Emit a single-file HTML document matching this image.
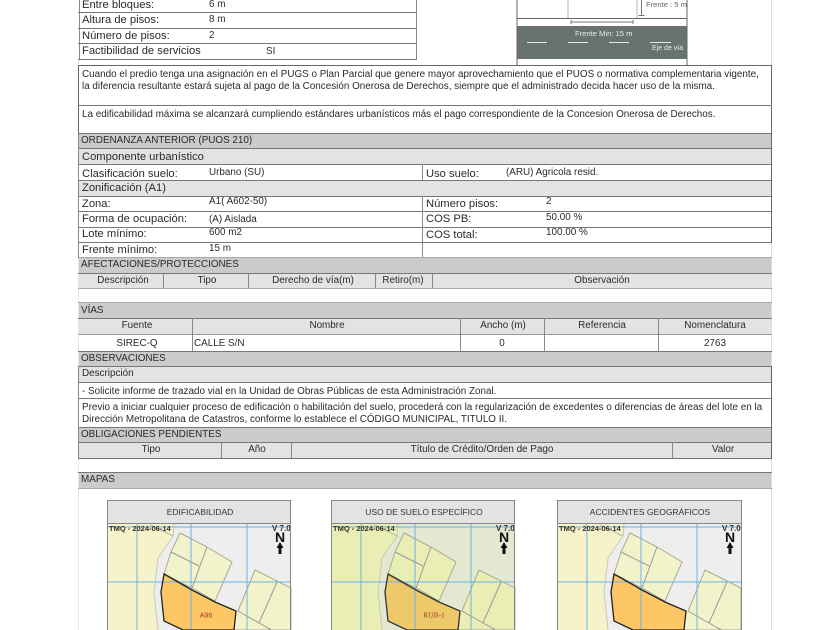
<!DOCTYPE html>
<html><head><meta charset="utf-8">
<style>
html,body{margin:0;padding:0;background:#fff}
#p{position:relative;width:840px;height:630px;overflow:hidden;background:#fff;font-family:"Liberation Sans",sans-serif;color:#2a2a2a;filter:blur(.35px)}
.r{position:absolute;box-sizing:border-box}
.d{background:#cbcbcb}.l{background:#e3e3e3}
.h{position:absolute;height:1px;background:#777}
.v{position:absolute;width:1px;background:#888}
.t{position:absolute;white-space:nowrap;line-height:14px;font-size:9.900px;margin-top:1px}
.b{font-size:11.200px}.m{font-size:9.900px}
.c{transform:translateX(-50%)}
svg text{font-family:"Liberation Sans",sans-serif}
</style></head><body><div id="p">
<div class="v" style="left:771px;top:0;height:630px;background:#ddd"></div>
<div class="v" style="left:78px;top:60px;height:570px;background:#e8e8e8"></div>

<!-- top table -->
<div class="h" style="left:78px;width:339px;top:12px"></div>
<div class="h" style="left:78px;width:339px;top:28px"></div>
<div class="h" style="left:78px;width:339px;top:43px"></div>
<div class="h" style="left:78px;width:339px;top:59px"></div>
<div class="v" style="left:79px;top:0;height:59px"></div>
<div class="v" style="left:416px;top:0;height:59px"></div>
<div class="t b" style="left:82px;top:-3px">Entre bloques:</div>
<div class="t b" style="left:82px;top:12px">Altura de pisos:</div>
<div class="t b" style="left:82px;top:28px">Número de pisos:</div>
<div class="t b" style="left:82px;top:43px">Factibilidad de servicios</div>
<div class="t" style="left:209px;top:-3px">6 m</div>
<div class="t" style="left:209px;top:12px">8 m</div>
<div class="t" style="left:209px;top:28px">2</div>
<div class="t" style="left:266px;top:44px">SI</div>

<!-- diagram -->
<svg class="r" style="left:510px;top:0" width="178" height="66" viewBox="0 0 178 66">
<rect x="7" y="0" width="170" height="66" fill="#fff"/>
<rect x="7" y="26" width="170" height="33" fill="#687370"/>
<path d="M7 0V66M177 0V66" stroke="#666" fill="none"/>
<path d="M7 18.500H177" stroke="#666" fill="none"/>
<path d="M58 0V18M127 0V18" stroke="#b4c6dc" stroke-width="1.200" fill="none"/>
<path d="M61 22H123M61 20V24M123 20V24" stroke="#777" fill="none"/>
<path d="M131.500 0V15M128.500 15.500H134.500" stroke="#777" fill="none"/>
<text x="136" y="7" font-size="7.600" fill="#666">Frente : 5 m</text>
<text x="65" y="36" font-size="7.600" fill="#e8eceb">Frente Min: 15 m</text>
<path d="M17 42.500H37M58 42.500H78M99 42.500H119M140 42.500H161" stroke="#e4e8e7" fill="none"/>
<text x="142" y="50" font-size="7" fill="#e8eceb">Eje de vía</text>
</svg>

<!-- notes -->
<div class="r" style="left:78px;top:65px;width:694px;height:70px;border:1px solid #666;border-bottom:0"></div>
<div class="h" style="left:78px;width:694px;top:105px"></div>
<div class="t" style="left:82px;top:67px">Cuando el predio tenga una asignación en el PUGS o Plan Parcial que genere mayor aprovechamiento que el PUOS o normativa complementaria vigente,</div>
<div class="t" style="left:82px;top:79px">la diferencia resultante estará sujeta al pago de la Concesión Onerosa de Derechos, siempre que el administrado decida hacer uso de la misma.</div>
<div class="t" style="left:82px;top:107px">La edificabilidad máxima se alcanzará cumpliendo estándares urbanísticos más el pago correspondiente de la Concesion Onerosa de Derechos.</div>

<!-- bands -->
<div class="r d" style="left:79px;top:134px;width:692px;height:15px"></div>
<div class="r l" style="left:79px;top:149px;width:692px;height:15px"></div>
<div class="r l" style="left:79px;top:181px;width:692px;height:15px"></div>
<div class="r d" style="left:79px;top:258px;width:692px;height:15px"></div>
<div class="r l" style="left:79px;top:274px;width:692px;height:15px"></div>
<div class="r d" style="left:79px;top:303px;width:692px;height:15px"></div>
<div class="r l" style="left:79px;top:319px;width:692px;height:15px"></div>
<div class="r d" style="left:79px;top:351px;width:692px;height:15px"></div>
<div class="r l" style="left:79px;top:367px;width:692px;height:15px"></div>
<div class="r d" style="left:79px;top:428px;width:692px;height:14px"></div>
<div class="r l" style="left:79px;top:443px;width:692px;height:15px"></div>
<div class="r d" style="left:79px;top:473px;width:692px;height:15px"></div>

<!-- horizontal rules -->
<div class="h" style="left:78px;width:694px;top:133px"></div>
<div class="h" style="left:78px;width:694px;top:148px"></div>
<div class="h" style="left:78px;width:694px;top:164px"></div>
<div class="h" style="left:78px;width:694px;top:180px"></div>
<div class="h" style="left:78px;width:694px;top:196px"></div>
<div class="h" style="left:78px;width:694px;top:211px"></div>
<div class="h" style="left:78px;width:694px;top:227px"></div>
<div class="h" style="left:78px;width:694px;top:242px"></div>
<div class="h" style="left:78px;width:694px;top:257px;background:#aaa"></div>
<div class="h" style="left:78px;width:694px;top:273px"></div>
<div class="h" style="left:78px;width:694px;top:288px;background:#aaa"></div>
<div class="h" style="left:78px;width:694px;top:302px;background:#aaa"></div>
<div class="h" style="left:78px;width:694px;top:318px"></div>
<div class="h" style="left:78px;width:694px;top:334px;background:#999"></div>
<div class="h" style="left:78px;width:694px;top:351px"></div>
<div class="h" style="left:78px;width:694px;top:366px"></div>
<div class="h" style="left:78px;width:694px;top:382px"></div>
<div class="h" style="left:78px;width:694px;top:398px"></div>
<div class="h" style="left:78px;width:694px;top:427px"></div>
<div class="h" style="left:78px;width:694px;top:442px"></div>
<div class="h" style="left:78px;width:694px;top:458px"></div>
<div class="h" style="left:78px;width:694px;top:472px"></div>
<div class="h" style="left:78px;width:694px;top:488px;background:#aaa"></div>

<!-- verticals -->
<div class="v" style="left:78px;top:133px;height:125px"></div>
<div class="v" style="left:771px;top:133px;height:110px;background:#666"></div>
<div class="v" style="left:422px;top:164px;height:16px"></div>
<div class="v" style="left:422px;top:196px;height:61px"></div>
<div class="v" style="left:163px;top:273px;height:15px"></div>
<div class="v" style="left:248px;top:273px;height:15px"></div>
<div class="v" style="left:375px;top:273px;height:15px"></div>
<div class="v" style="left:432px;top:273px;height:15px"></div>
<div class="v" style="left:192px;top:318px;height:33px"></div>
<div class="v" style="left:460px;top:318px;height:33px"></div>
<div class="v" style="left:544px;top:318px;height:33px"></div>
<div class="v" style="left:658px;top:318px;height:33px"></div>
<div class="v" style="left:78px;top:366px;height:92px"></div>
<div class="v" style="left:771px;top:366px;height:92px;background:#666"></div>
<div class="v" style="left:221px;top:442px;height:16px"></div>
<div class="v" style="left:291px;top:442px;height:16px"></div>
<div class="v" style="left:672px;top:442px;height:16px"></div>

<!-- ordenanza text -->
<div class="t m" style="left:81px;top:133px">ORDENANZA ANTERIOR (PUOS 210)</div>
<div class="t b" style="left:82px;top:149px">Componente urbanístico</div>
<div class="t b" style="left:82px;top:166px">Clasificación suelo:</div>
<div class="t" style="left:209px;top:165px">Urbano (SU)</div>
<div class="t b" style="left:426px;top:166px">Uso suelo:</div>
<div class="t" style="left:506px;top:165px">(ARU) Agricola resid.</div>
<div class="t b" style="left:82px;top:180px">Zonificación (A1)</div>
<div class="t b" style="left:82px;top:196px">Zona:</div>
<div class="t" style="left:209px;top:194px">A1( A602-50)</div>
<div class="t b" style="left:82px;top:211px">Forma de ocupación:</div>
<div class="t" style="left:209px;top:212px">(A) Aislada</div>
<div class="t b" style="left:82px;top:226px">Lote mínimo:</div>
<div class="t" style="left:209px;top:225px">600 m2</div>
<div class="t b" style="left:82px;top:242px">Frente mínimo:</div>
<div class="t" style="left:209px;top:241px">15 m</div>
<div class="t b" style="left:426px;top:196px">Número pisos:</div>
<div class="t" style="left:546px;top:194px">2</div>
<div class="t b" style="left:426px;top:211px">COS PB:</div>
<div class="t" style="left:546px;top:210px">50.00 %</div>
<div class="t b" style="left:426px;top:227px">COS total:</div>
<div class="t" style="left:546px;top:225px">100.00 %</div>

<div class="t m" style="left:81px;top:257px">AFECTACIONES/PROTECCIONES</div>
<div class="t c m" style="left:123px;top:273px">Descripción</div>
<div class="t c m" style="left:207px;top:273px">Tipo</div>
<div class="t c m" style="left:313px;top:273px">Derecho de vía(m)</div>
<div class="t c m" style="left:403px;top:273px">Retiro(m)</div>
<div class="t c m" style="left:602px;top:273px">Observación</div>

<div class="t m" style="left:81px;top:303px">VÍAS</div>
<div class="t c m" style="left:137px;top:318px">Fuente</div>
<div class="t c m" style="left:327px;top:318px">Nombre</div>
<div class="t c m" style="left:503px;top:318px">Ancho (m)</div>
<div class="t c m" style="left:602px;top:318px">Referencia</div>
<div class="t c m" style="left:715px;top:318px">Nomenclatura</div>
<div class="t c m" style="left:137px;top:336px">SIREC-Q</div>
<div class="t m" style="left:194px;top:336px">CALLE S/N</div>
<div class="t c m" style="left:502px;top:336px">0</div>
<div class="t c m" style="left:715px;top:336px">2763</div>

<div class="t m" style="left:81px;top:351px">OBSERVACIONES</div>
<div class="t" style="left:82px;top:366px">Descripción</div>
<div class="t m" style="left:82px;top:384px">- Solicite informe de trazado vial en la Unidad de Obras Públicas de esta Administración Zonal.</div>
<div class="t m" style="left:82px;top:400px">Previo a iniciar cualquier proceso de edificación o habilitación del suelo, procederá con la regularización de excedentes o diferencias de áreas del lote en la</div>
<div class="t m" style="left:82px;top:412px">Dirección Metropolitana de Catastros, conforme lo establece el CÓDIGO MUNICIPAL, TITULO II.</div>
<div class="t m" style="left:81px;top:427px">OBLIGACIONES PENDIENTES</div>
<div class="t c m" style="left:151px;top:442px">Tipo</div>
<div class="t c m" style="left:257px;top:442px">Año</div>
<div class="t c m" style="left:482px;top:442px">Título de Crédito/Orden de Pago</div>
<div class="t c m" style="left:723px;top:442px">Valor</div>
<div class="t m" style="left:81px;top:472px">MAPAS</div>

<!-- map 1 -->
<svg class="r" style="left:107px;top:500px" width="185" height="130" viewBox="0 0 185 130">
<rect x="1" y="1" width="183" height="22" fill="#e3e3e3"/>
<text x="93" y="15" font-size="8.500" text-anchor="middle" fill="#333">EDIFICABILIDAD</text>
<rect x="1" y="24" width="183" height="106" fill="#eeeeee"/>
<path d="M1 24H67L66 36L51 58L47 92L51 130H1Z" fill="#f6f3cb"/>
<path d="M67 24L66 36L51 58L47 92L51 130" stroke="#c9c9b4" fill="none"/>
<path d="M43 25L66 36" stroke="#b9b9a0" fill="none"/>
<path d="M73 33L100 47L125 62L108 101L85 88L57 74L64 52Z" fill="#f3f3cb" stroke="#a9a990"/>
<path d="M64 52L92 66M100 47L85 88" stroke="#999" fill="none"/>
<path d="M148 70L184 88V130H120L131 111Z" fill="#f3f3cb" stroke="#a9a990"/>
<path d="M170 82L152 123M131 111L152 123L170 133" stroke="#999" fill="none"/>
<path d="M108 101L131 111L127 130H108Z" fill="#f3f3cb"/>
<path d="M57 74L85 90L108 102L129 111L127 130H76L57 121L54 92Z" fill="#fdc766"/>
<path d="M30 24V130M84 24V130M140 24V130M1 82H184M1 27H184" stroke="#6cb2e6" fill="none"/>
<path d="M57 74L85 90L108 102L129 111L127 130H76L57 121L54 92Z" fill="none" stroke="#222" stroke-width="1.300"/>
<text x="99" y="117.500" font-size="7" text-anchor="middle" fill="#a5392b">A96</text>
<text x="2" y="31" font-size="7.500" font-weight="bold" fill="#333">TMQ - 2024-06-14</text>
<text x="165" y="31" font-size="8" font-weight="bold" fill="#333">V 7.0</text>
<text x="173" y="42" font-size="14" font-weight="bold" text-anchor="middle" fill="#111">N</text>
<path d="M173 42L176.500 48H174.500V54H171.500V48H169.500Z" fill="#111"/>
<path d="M.5 130V.5H183.500V130M0 23.500H184" fill="none" stroke="#888"/>
</svg>

<!-- map 2 -->
<svg class="r" style="left:331px;top:500px" width="185" height="130" viewBox="0 0 185 130">
<rect x="1" y="1" width="183" height="22" fill="#e3e3e3"/>
<text x="93" y="15" font-size="8.500" text-anchor="middle" fill="#333">USO DE SUELO ESPECÍFICO</text>
<rect x="1" y="24" width="183" height="106" fill="#e3e9d0"/>
<path d="M1 24H67L66 36L51 58L47 92L51 130H1Z" fill="#e8eeb4"/>
<path d="M67 24L66 36L51 58L47 92L51 130" stroke="#c5c9a8" fill="none"/>
<path d="M43 25L66 36" stroke="#b9b9a0" fill="none"/>
<path d="M73 33L100 47L125 62L108 101L85 88L57 74L64 52Z" fill="#e8eeb4" stroke="#a9a990"/>
<path d="M64 52L92 66M100 47L85 88" stroke="#999" fill="none"/>
<path d="M148 70L184 88V130H120L131 111Z" fill="#e8eeb4" stroke="#a9a990"/>
<path d="M170 82L152 123M131 111L152 123L170 133" stroke="#999" fill="none"/>
<path d="M108 101L131 111L127 130H108Z" fill="#e8eeb4"/>
<path d="M57 74L85 90L108 102L129 111L127 130H76L57 121L54 92Z" fill="#eec96a"/>
<path d="M30 24V130M84 24V130M140 24V130M1 82H184M1 27H184" stroke="#6cb2e6" fill="none"/>
<path d="M57 74L85 90L108 102L129 111L127 130H76L57 121L54 92Z" fill="none" stroke="#333" stroke-width="1.300"/>
<text x="103" y="117.500" font-size="7.500" text-anchor="middle" style="font-family:'Liberation Serif',serif" fill="#a5392b">RUB-1</text>
<text x="2" y="31" font-size="7.500" font-weight="bold" fill="#333">TMQ - 2024-06-14</text>
<text x="165" y="31" font-size="8" font-weight="bold" fill="#333">V 7.0</text>
<text x="173" y="42" font-size="14" font-weight="bold" text-anchor="middle" fill="#111">N</text>
<path d="M173 42L176.500 48H174.500V54H171.500V48H169.500Z" fill="#111"/>
<path d="M.5 130V.5H183.500V130M0 23.500H184" fill="none" stroke="#888"/>
</svg>

<!-- map 3 -->
<svg class="r" style="left:557px;top:500px" width="186" height="130" viewBox="0 0 186 130">
<rect x="1" y="1" width="183" height="22" fill="#e3e3e3"/>
<text x="93" y="15" font-size="8.500" text-anchor="middle" fill="#333">ACCIDENTES GEOGRÁFICOS</text>
<rect x="1" y="24" width="183" height="106" fill="#eeeeee"/>
<path d="M1 24H67L66 36L51 58L47 92L51 130H1Z" fill="#f6f3cb"/>
<path d="M67 24L66 36L51 58L47 92L51 130" stroke="#c9c9b4" fill="none"/>
<path d="M43 25L66 36" stroke="#b9b9a0" fill="none"/>
<path d="M73 33L100 47L125 62L108 101L85 88L57 74L64 52Z" fill="#f3f3cb" stroke="#a9a990"/>
<path d="M64 52L92 66M100 47L85 88" stroke="#999" fill="none"/>
<path d="M148 70L184 88V130H120L131 111Z" fill="#f3f3cb" stroke="#a9a990"/>
<path d="M170 82L152 123M131 111L152 123L170 133" stroke="#999" fill="none"/>
<path d="M108 101L131 111L127 130H108Z" fill="#f3f3cb"/>
<path d="M57 74L85 90L108 102L129 111L127 130H76L57 121L54 92Z" fill="#fdc766"/>
<path d="M30 24V130M84 24V130M140 24V130M1 82H184M1 27H184" stroke="#6cb2e6" fill="none"/>
<path d="M57 74L85 90L108 102L129 111L127 130H76L57 121L54 92Z" fill="none" stroke="#222" stroke-width="1.300"/>
<text x="2" y="31" font-size="7.500" font-weight="bold" fill="#333">TMQ - 2024-06-14</text>
<text x="165" y="31" font-size="8" font-weight="bold" fill="#333">V 7.0</text>
<text x="173" y="42" font-size="14" font-weight="bold" text-anchor="middle" fill="#111">N</text>
<path d="M173 42L176.500 48H174.500V54H171.500V48H169.500Z" fill="#111"/>
<path d="M.5 130V.5H184.500V130M0 23.500H185" fill="none" stroke="#888"/>
</svg>
</div></body></html>
